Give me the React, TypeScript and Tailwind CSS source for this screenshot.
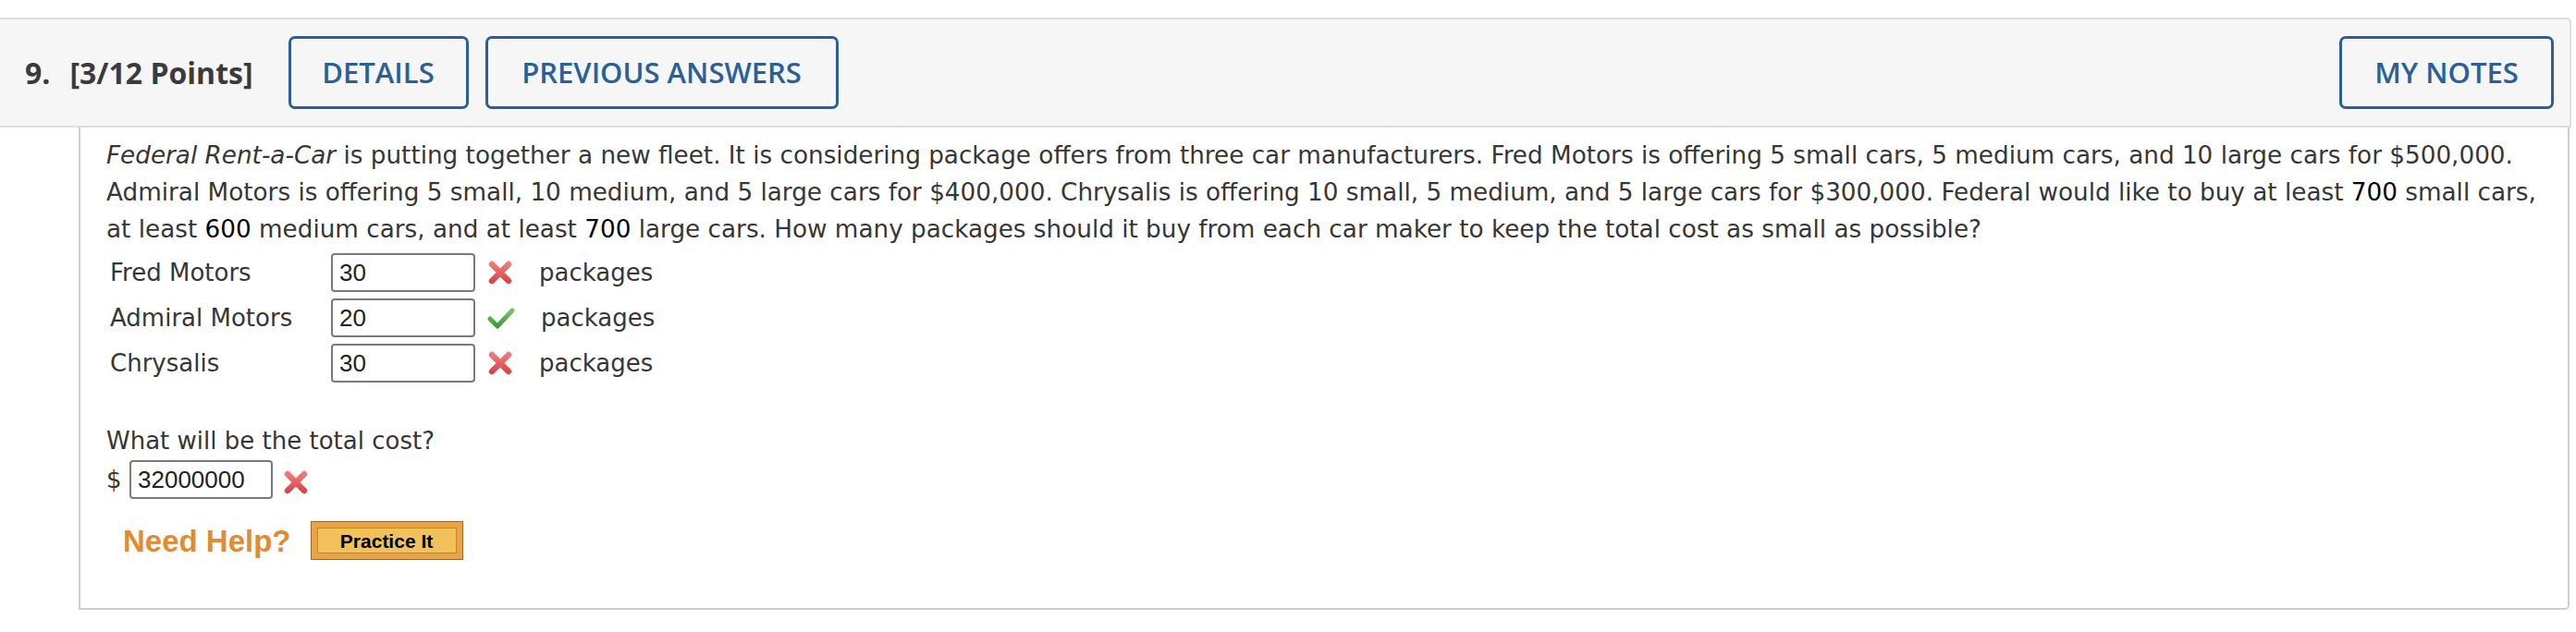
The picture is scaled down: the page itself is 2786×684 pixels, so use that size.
import React from "react";

const XMark = () => (
  <svg width="28" height="26" viewBox="0 0 28 26" className="block">
    <defs>
      <linearGradient id="xg" x1="0" y1="0" x2="0" y2="1">
        <stop offset="0" stopColor="#f07a7a" />
        <stop offset="1" stopColor="#d94848" />
      </linearGradient>
    </defs>
    <path d="M5 4 L23 22 M23 4 L5 22" stroke="url(#xg)" strokeWidth="6.5" strokeLinecap="round" fill="none" />
  </svg>
);

const Check = () => (
  <svg width="30" height="26" viewBox="0 0 30 26" className="block">
    <defs>
      <linearGradient id="cg" x1="0" y1="0" x2="0" y2="1">
        <stop offset="0" stopColor="#7cc36a" />
        <stop offset="1" stopColor="#3f9a35" />
      </linearGradient>
    </defs>
    <path d="M3 14 L11 22 L27 5" stroke="url(#cg)" strokeWidth="5" strokeLinecap="round" strokeLinejoin="round" fill="none" />
  </svg>
);

const Box = ({ v, w = "w-[156px]" }: { v: string; w?: string }) => (
  <div
    className={`${w} h-[42px] border-2 border-[#7a7a7a] rounded-[4px] bg-white flex items-center pl-[7px] text-[26px] text-[#222]`}
    style={{ fontFamily: '"Liberation Sans", Arial, sans-serif' }}
  >
    {v}
  </div>
);

const Row = ({ label, v, ok }: { label: string; v: string; ok?: boolean }) => (
  <div className="flex items-center h-[49px]">
    <div className="w-[243px] pl-[4px]">{label}</div>
    <Box v={v} />
    <div className="ml-[13px]">{ok ? <Check /> : <XMark />}</div>
    <div className="ml-[28px]">packages</div>
  </div>
);

const HeadBtn = ({ children, w }: { children: React.ReactNode; w: string }) => (
  <div
    className={`${w} h-[79px] border-[3px] border-[#29609a] rounded-[7px] flex items-center justify-center text-[31px] font-semibold text-[#29609a]`}
  >
    {children}
  </div>
);

export default function App() {
  return (
    <div className="w-[2786px] h-[684px] bg-white pt-[19px] overflow-hidden">
      <div
        className="flex items-center h-[119px] w-[2781px] bg-[#f6f6f6] border-y-2 border-r-2 border-[#dddddd] rounded-tr-[5px] pl-[27px]"
        style={{ fontFamily: '"Open Sans", "Noto Sans", sans-serif' }}
      >
        <span className="font-bold text-[32px] text-[#3b3b3b] mr-[21px]">9.</span>
        <span className="font-bold text-[32px] text-[#3b3b3b]">[3/12 Points]</span>
        <div className="ml-[38px]">
          <HeadBtn w="w-[195px]">DETAILS</HeadBtn>
        </div>
        <div className="ml-[18px]">
          <HeadBtn w="w-[382px]">PREVIOUS ANSWERS</HeadBtn>
        </div>
        <div className="flex-1" />
        <div className="mr-[17px]">
          <HeadBtn w="w-[232px]">MY NOTES</HeadBtn>
        </div>
      </div>
      <div
        className="ml-[85px] w-[2694px] h-[522px] border-2 border-t-0 border-[#cfcfcf] rounded-br-[5px] pl-[28px] pt-[10px] text-[26px] leading-[40px] text-[#363636]"
        style={{ fontFamily: '"DejaVu Sans", Verdana, sans-serif' }}
      >
        <p className="whitespace-nowrap text-[26.25px]">
          <i>Federal Rent-a-Car</i> is putting together a new fleet. It is considering package offers from three car
          manufacturers. Fred Motors is offering 5 small cars, 5 medium cars, and 10 large cars for $500,000.
          <br />
          Admiral Motors is offering 5 small, 10 medium, and 5 large cars for $400,000. Chrysalis is offering 10 small, 5
          medium, and 5 large cars for $300,000. Federal would like to buy at least <span className="text-black">700</span>{" "}
          small cars,
          <br />
          at least <span className="text-black">600</span> medium cars, and at least{" "}
          <span className="text-black">700</span> large cars. How many packages should it buy from each car maker to keep
          the total cost as small as possible?
        </p>
        <div className="mt-[2px]">
          <Row label="Fred Motors" v="30" />
          <Row label="Admiral Motors" v="20" ok />
          <Row label="Chrysalis" v="30" />
        </div>
        <div className="h-[40px]" />
        <div className="h-[40px]">What will be the total cost?</div>
        <div className="flex items-center h-[44px]">
          <span className="w-[25px]">$</span>
          <Box v="32000000" w="w-[155px]" />
          <div className="ml-[11px] mt-[6px]">
            <XMark />
          </div>
        </div>
        <div className="flex items-center h-[42px] mt-[23px] pl-[18px]">
          <span
            className="text-[33px] font-bold text-[#e38b32] leading-none"
            style={{ fontFamily: '"Liberation Sans", Arial, sans-serif' }}
          >
            Need Help?
          </span>
          <div className="ml-[21px] w-[165px] h-[42px] border border-[#9c6b2c] bg-[#eca344] p-[6px]">
            <div
              className="w-full h-full border border-[#b8873c] bg-[#f3c15b] flex items-center justify-center text-[21px] font-bold text-black leading-none"
              style={{ fontFamily: '"Liberation Sans", Arial, sans-serif' }}
            >
              Practice It
            </div>
          </div>
        </div>
      </div>
    </div>
  );
}
